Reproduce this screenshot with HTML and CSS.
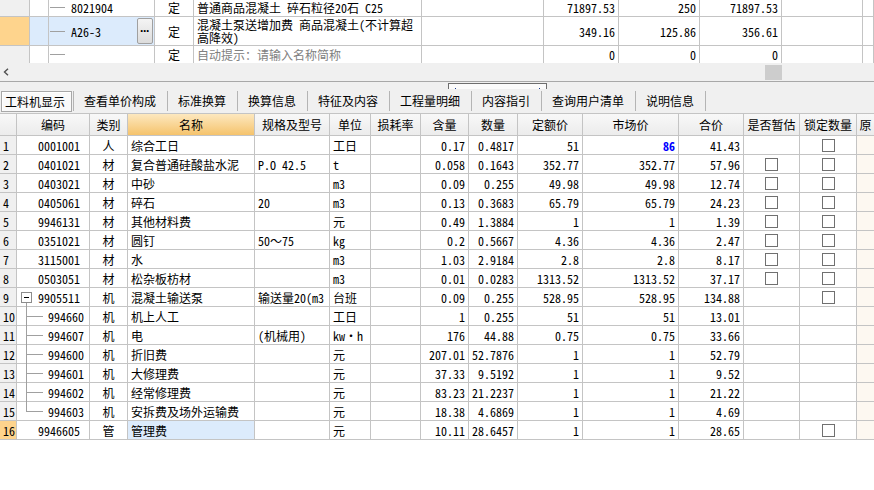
FILE: index.html
```html
<!DOCTYPE html>
<html lang="zh-CN">
<head>
<meta charset="utf-8">
<title>工料机显示</title>
<link rel="stylesheet" href="styles.css">
</head>
<body>
<div class="top">
  <div class="trow r1">
    <div class="hd"></div><div></div>
    <div class="tcode"><span class="stub"></span>8021904</div>
    <div class="c">定</div>
    <div class="l">普通商品混凝土 碎石粒径20石 C25</div>
    <div></div>
    <div class="n">71897.53</div><div class="n">250</div><div class="n">71897.53</div><div></div><div></div>
  </div>
  <div class="trow r2">
    <div class="hd cur"></div><div class="blue"></div>
    <div class="tcode blue"><span class="stub"></span>A26-3<span class="more">···</span></div>
    <div class="c">定</div>
    <div class="l wrap"><span class="ln">混凝土泵送增加费 商品混凝土(不计算超</span><span class="ln">高降效)</span></div>
    <div></div>
    <div class="n">349.16</div><div class="n">125.86</div><div class="n">356.61</div><div></div><div></div>
  </div>
  <div class="trow r3">
    <div class="hd"></div><div></div>
    <div class="tcode"><span class="stub"></span></div>
    <div class="c">定</div>
    <div class="l hint">自动提示：请输入名称简称</div>
    <div></div>
    <div class="n">0</div><div class="n">0</div><div class="n">0</div><div></div><div></div>
  </div>
</div>
<div class="hscroll">
  <svg class="arrow" width="6" height="8" viewBox="0 0 6 8"><path d="M5 0.8 L1.5 4 L5 7.2" fill="none" stroke="#505050" stroke-width="1.4"/></svg>
  <span class="thumb"></span>
</div>
<div class="splitter"><span class="handle"><i></i><i></i></span></div>
<div class="tabs">
  <span class="tab active">工料机显示</span><span class="sep"></span>
  <span class="tab">查看单价构成</span><span class="sep"></span>
  <span class="tab">标准换算</span><span class="sep"></span>
  <span class="tab">换算信息</span><span class="sep"></span>
  <span class="tab">特征及内容</span><span class="sep"></span>
  <span class="tab">工程量明细</span><span class="sep"></span>
  <span class="tab">内容指引</span><span class="sep"></span>
  <span class="tab">查询用户清单</span><span class="sep"></span>
  <span class="tab">说明信息</span><span class="sep"></span>
</div>
<div class="grid">
  <div class="grow ghead">
    <div></div><div>编码</div><div>类别</div><div class="sel">名称</div><div>规格及型号</div><div>单位</div><div>损耗率</div><div>含量</div><div>数量</div><div>定额价</div><div>市场价</div><div>合价</div><div>是否暂估</div><div>锁定数量</div><div>原</div>
  </div>
  <div class="grow"><div class="rn">1</div><div class="code">0001001</div><div class="c">人</div><div class="l">综合工日</div><div class="l"></div><div class="l">工日</div><div></div><div class="n">0.17</div><div class="n">0.4817</div><div class="n">51</div><div class="n hot">86</div><div class="n">41.43</div><div></div><div class="c"><span class="cb"></span></div><div class="orig"></div></div>
  <div class="grow"><div class="rn">2</div><div class="code">0401021</div><div class="c">材</div><div class="l">复合普通硅酸盐水泥</div><div class="l">P.O 42.5</div><div class="l">t</div><div></div><div class="n">0.058</div><div class="n">0.1643</div><div class="n">352.77</div><div class="n">352.77</div><div class="n">57.96</div><div class="c"><span class="cb"></span></div><div class="c"><span class="cb"></span></div><div class="orig"></div></div>
  <div class="grow"><div class="rn">3</div><div class="code">0403021</div><div class="c">材</div><div class="l">中砂</div><div class="l"></div><div class="l">m3</div><div></div><div class="n">0.09</div><div class="n">0.255</div><div class="n">49.98</div><div class="n">49.98</div><div class="n">12.74</div><div class="c"><span class="cb"></span></div><div class="c"><span class="cb"></span></div><div class="orig"></div></div>
  <div class="grow"><div class="rn">4</div><div class="code">0405061</div><div class="c">材</div><div class="l">碎石</div><div class="l">20</div><div class="l">m3</div><div></div><div class="n">0.13</div><div class="n">0.3683</div><div class="n">65.79</div><div class="n">65.79</div><div class="n">24.23</div><div class="c"><span class="cb"></span></div><div class="c"><span class="cb"></span></div><div class="orig"></div></div>
  <div class="grow"><div class="rn">5</div><div class="code">9946131</div><div class="c">材</div><div class="l">其他材料费</div><div class="l"></div><div class="l">元</div><div></div><div class="n">0.49</div><div class="n">1.3884</div><div class="n">1</div><div class="n">1</div><div class="n">1.39</div><div class="c"><span class="cb"></span></div><div class="c"><span class="cb"></span></div><div class="orig"></div></div>
  <div class="grow"><div class="rn">6</div><div class="code">0351021</div><div class="c">材</div><div class="l">圆钉</div><div class="l">50～75</div><div class="l">kg</div><div></div><div class="n">0.2</div><div class="n">0.5667</div><div class="n">4.36</div><div class="n">4.36</div><div class="n">2.47</div><div class="c"><span class="cb"></span></div><div class="c"><span class="cb"></span></div><div class="orig"></div></div>
  <div class="grow"><div class="rn">7</div><div class="code">3115001</div><div class="c">材</div><div class="l">水</div><div class="l"></div><div class="l">m3</div><div></div><div class="n">1.03</div><div class="n">2.9184</div><div class="n">2.8</div><div class="n">2.8</div><div class="n">8.17</div><div class="c"><span class="cb"></span></div><div class="c"><span class="cb"></span></div><div class="orig"></div></div>
  <div class="grow"><div class="rn">8</div><div class="code">0503051</div><div class="c">材</div><div class="l">松杂板枋材</div><div class="l"></div><div class="l">m3</div><div></div><div class="n">0.01</div><div class="n">0.0283</div><div class="n">1313.52</div><div class="n">1313.52</div><div class="n">37.17</div><div class="c"><span class="cb"></span></div><div class="c"><span class="cb"></span></div><div class="orig"></div></div>
  <div class="grow"><div class="rn">9</div><div class="code root"><span class="toggle"></span>9905511</div><div class="c">机</div><div class="l">混凝土输送泵</div><div class="l">输送量20(m3</div><div class="l">台班</div><div></div><div class="n">0.09</div><div class="n">0.255</div><div class="n">528.95</div><div class="n">528.95</div><div class="n">134.88</div><div></div><div class="c"><span class="cb"></span></div><div class="orig"></div></div>
  <div class="grow"><div class="rn">10</div><div class="code leaf">994660</div><div class="c">机</div><div class="l">机上人工</div><div class="l"></div><div class="l">工日</div><div></div><div class="n">1</div><div class="n">0.255</div><div class="n">51</div><div class="n">51</div><div class="n">13.01</div><div></div><div></div><div class="orig"></div></div>
  <div class="grow"><div class="rn">11</div><div class="code leaf">994607</div><div class="c">机</div><div class="l">电</div><div class="l">(机械用)</div><div class="l">kw·h</div><div></div><div class="n">176</div><div class="n">44.88</div><div class="n">0.75</div><div class="n">0.75</div><div class="n">33.66</div><div></div><div></div><div class="orig"></div></div>
  <div class="grow"><div class="rn">12</div><div class="code leaf">994600</div><div class="c">机</div><div class="l">折旧费</div><div class="l"></div><div class="l">元</div><div></div><div class="n">207.01</div><div class="n">52.7876</div><div class="n">1</div><div class="n">1</div><div class="n">52.79</div><div></div><div></div><div class="orig"></div></div>
  <div class="grow"><div class="rn">13</div><div class="code leaf">994601</div><div class="c">机</div><div class="l">大修理费</div><div class="l"></div><div class="l">元</div><div></div><div class="n">37.33</div><div class="n">9.5192</div><div class="n">1</div><div class="n">1</div><div class="n">9.52</div><div></div><div></div><div class="orig"></div></div>
  <div class="grow"><div class="rn">14</div><div class="code leaf">994602</div><div class="c">机</div><div class="l">经常修理费</div><div class="l"></div><div class="l">元</div><div></div><div class="n">83.23</div><div class="n">21.2237</div><div class="n">1</div><div class="n">1</div><div class="n">21.22</div><div></div><div></div><div class="orig"></div></div>
  <div class="grow"><div class="rn">15</div><div class="code leaf last">994603</div><div class="c">机</div><div class="l">安拆费及场外运输费</div><div class="l"></div><div class="l">元</div><div></div><div class="n">18.38</div><div class="n">4.6869</div><div class="n">1</div><div class="n">1</div><div class="n">4.69</div><div></div><div></div><div class="orig"></div></div>
  <div class="grow"><div class="rn cur">16</div><div class="code">9946605</div><div class="c">管</div><div class="l blue">管理费</div><div class="l"></div><div class="l">元</div><div></div><div class="n">10.11</div><div class="n">28.6457</div><div class="n">1</div><div class="n">1</div><div class="n">28.65</div><div></div><div class="c"><span class="cb"></span></div><div class="orig"></div></div>
</div>
</body>
</html>
```

FILE: styles.css
```css
* { box-sizing: border-box; }

html, body {
  margin: 0;
  padding: 0;
}

body {
  width: 874px;
  height: 490px;
  overflow: hidden;
  background: #ffffff;
  color: #000;
  font-family: "Noto Sans Mono CJK SC", "Noto Sans CJK SC", monospace;
  font-size: 12px;
}

/* ---------- upper grid (cut off) ---------- */
.top { background: #fff; }

.trow {
  display: grid;
  grid-template-columns: 30px 19px 106px 39px 228px 122px 75px 81px 82px 81px 11px;
  border-bottom: 1px solid #c4c4c4;
}
.trow > div {
  border-right: 1px solid #c4c4c4;
  overflow: hidden;
  white-space: nowrap;
  display: flex;
  align-items: center;
}
.r1 { height: 17px; }
.r1 > div { padding-bottom: 2px; }
.r2 { height: 29px; }
.r3 { height: 17px; border-bottom: none; }

.trow .hd { background: #f0f0f0; }
.trow .hd.cur { background: #fed48d; }
.blue { background: #dcebfc; }

.tcode { padding-left: 1px; }
.stub {
  display: inline-block;
  width: 15px;
  height: 1px;
  background: #a0a0a0;
  margin-right: 6px;
  flex: none;
}
.more {
  margin-left: auto;
  margin-right: 1px;
  width: 16px;
  height: 26px;
  border: 1px solid #a0a0a0;
  border-radius: 2px;
  background: linear-gradient(#f4f4f4, #dcdcdc);
  display: flex;
  align-items: center;
  justify-content: center;
  font-family: "Liberation Sans", sans-serif;
  font-weight: bold;
  font-size: 12px;
  letter-spacing: -1px;
  padding-right: 1px;
}

.trow .c { justify-content: center; }
.trow .l { padding-left: 3px; }
.trow .n { justify-content: flex-end; padding-right: 3px; }
.trow > .wrap {
  flex-direction: column;
  align-items: flex-start;
  justify-content: center;
  overflow: visible;
}
.wrap .ln {
  display: block;
  height: 13px;
  line-height: 13px;
}
.hint { color: #808080; }

/* ---------- horizontal scrollbar ---------- */
.hscroll {
  height: 18px;
  background: #f0f0f0;
  display: flex;
  align-items: center;
}
.arrow { margin-left: 3px; flex: none; }
.thumb {
  width: 17px;
  height: 15px;
  background: #cdcdcd;
  margin-left: 756px;
}

/* ---------- splitter ---------- */
.splitter {
  height: 8px;
  border-top: 1px solid #a8a8a8;
  background: #f0f0f0;
  padding-top: 1px;
}
.handle {
  display: flex;
  justify-content: space-between;
  align-items: flex-end;
  width: 99px;
  height: 7px;
  margin-left: 448px;
  border: 1px solid #6e6e6e;
  border-bottom: none;
  background: #fbfbfb;
  padding: 0 6px 1px;
}
.handle i {
  display: block;
  width: 1px;
  height: 1px;
  background: #1a3a8c;
}

/* ---------- tabs ---------- */
.tabs {
  height: 24px;
  background: #f0f0f0;
  display: flex;
  align-items: center;
  font-family: "Noto Sans CJK SC", sans-serif;
  font-size: 12px;
  line-height: 20px;
}
.tab {
  padding: 0 11px 0 10px;
  white-space: nowrap;
}
.tab.active {
  margin-left: 1px;
  width: 71px;
  height: 21px;
  padding: 0 0 0 3px;
  border: 1px solid #a8a8a8;
  background: #f9f9f9;
  box-shadow: inset 1px 1px 0 #ffffff;
  margin-right: 1px;
}
.sep {
  width: 1px;
  height: 20px;
  background: #b4b4b4;
  flex: none;
}

/* ---------- main grid ---------- */
.grid { background: #fff; }

.grow {
  display: grid;
  grid-template-columns: 17px 73px 38px 127px 75px 41px 50px 48px 49px 65px 96px 65px 56px 57px 17px;
  height: 19px;
  border-bottom: 1px solid #c4c4c4;
}
.grow > div {
  border-right: 1px solid #c4c4c4;
  display: flex;
  align-items: center;
  white-space: nowrap;
  overflow: hidden;
  position: relative;
}
.grow > div:last-child { border-right: none; }

.ghead {
  height: 23px;
  border-top: 1px solid #c4c4c4;
  background: linear-gradient(#f8f8f8, #ececec);
  font-family: "Noto Sans CJK SC", sans-serif;
}
.ghead > div { justify-content: center; }
.ghead > .sel { background: linear-gradient(#fde8bf, #f5c36c); }

.rn {
  background: #f0f0f0;
  padding-left: 3px;
}
.rn.cur { background: #fed48d; }

.code { padding-left: 21px; overflow: visible !important; }
.code.root { padding-left: 4px; }
.code.leaf { padding-left: 31px; }

.toggle {
  width: 11px;
  height: 11px;
  border: 1px solid #8c8c8c;
  background: #fff;
  margin-right: 6px;
  position: relative;
  flex: none;
}
.toggle::after {
  content: "";
  position: absolute;
  left: 2px;
  top: 4px;
  width: 5px;
  height: 1px;
  background: #000;
}
.toggle::before {
  content: "";
  position: absolute;
  left: 4px;
  top: 10px;
  width: 1px;
  height: 5px;
  background: #a0a0a0;
}
.leaf::before {
  content: "";
  position: absolute;
  left: 9px;
  top: -1px;
  bottom: -1px;
  width: 1px;
  background: #a0a0a0;
}
.leaf.last::before { bottom: 50%; }
.leaf::after {
  content: "";
  position: absolute;
  left: 9px;
  top: 50%;
  width: 17px;
  height: 1px;
  background: #a0a0a0;
}

.grow .c { justify-content: center; }
.grow .l { padding-left: 3px; }
.grow .n { justify-content: flex-end; padding-right: 3px; }
.grow .hot { color: #0000ff; font-weight: bold; }
.grow .l.blue { background: #dcebfc; }
.grow .orig { background: #fdf8f1; }
.ghead .orig { background: inherit; }

.cb {
  display: inline-block;
  width: 13px;
  height: 13px;
  border: 1px solid #707070;
  background: #fff;
}
```
